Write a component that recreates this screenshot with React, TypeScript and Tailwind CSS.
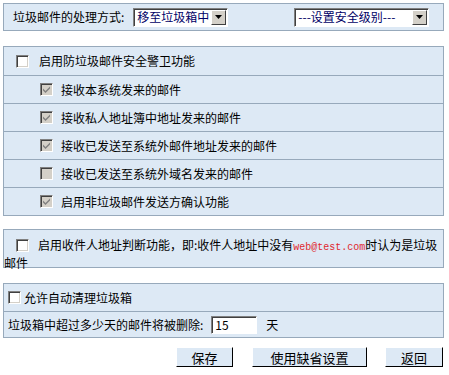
import React from 'react';

const font = "font-['SimSun','Noto_Sans_CJK_SC',sans-serif]";

function Box({ checked = false, disabled = false }: { checked?: boolean; disabled?: boolean }) {
  return (
    <span
      className={`inline-flex h-[13px] w-[13px] shrink-0 items-center justify-center border border-t-[#808080] border-l-[#808080] border-b-white border-r-white shadow-[inset_1px_1px_0_#404040,inset_-1px_-1px_0_#d4d0c8] ${
        disabled ? 'bg-[#d4d0c8]' : 'bg-white'
      }`}
    >
      {checked && (
        <svg width="7" height="7" viewBox="0 0 7 7">
          <path d="M0 2.5 L2.5 5 L7 0.5 L7 2.5 L2.5 7 L0 4.5 Z" fill="#808080" />
        </svg>
      )}
    </span>
  );
}

function Select({ label, width }: { label: string; width: string }) {
  return (
    <span
      className={`inline-flex h-[19px] ${width} items-center justify-between border border-t-[#808080] border-l-[#808080] border-b-white border-r-white bg-white shadow-[inset_1px_1px_0_#404040] pl-[3px] pr-[1px]`}
    >
      <span className="whitespace-nowrap text-[12px] leading-none text-[#000066]">{label}</span>
      <span className="flex h-[15px] w-[15px] shrink-0 items-center justify-center border border-t-white border-l-white border-b-[#404040] border-r-[#404040] bg-[#d4d0c8]">
        <svg width="7" height="4" viewBox="0 0 7 4">
          <path d="M0 0 H7 L3.5 4 Z" fill="#000" />
        </svg>
      </span>
    </span>
  );
}

const subRows = [
  { text: '接收本系统发来的邮件', checked: true },
  { text: '接收私人地址簿中地址发来的邮件', checked: true },
  { text: '接收已发送至系统外邮件地址发来的邮件', checked: true },
  { text: '接收已发送至系统外域名发来的邮件', checked: false },
  { text: '启用非垃圾邮件发送方确认功能', checked: true },
];

export default function App() {
  return (
    <div className={`min-h-[375px] w-[449px] bg-white px-[3px] pt-[3px] text-[12px] text-black ${font}`}>
      {/* Handling mode */}
      <div className="flex h-[28px] w-[441px] items-center border border-[#97a9bb] bg-[#dde9f5] pl-[9px]">
        <span>垃圾邮件的处理方式:</span>
        <span className="ml-[9px] flex">
          <Select label="移至垃圾箱中" width="w-[95px]" />
        </span>
        <span className="ml-[66px] flex">
          <Select label="---设置安全级别---" width="w-[135px]" />
        </span>
      </div>

      {/* Security guard */}
      <div className="mt-[15px] w-[441px] border border-[#97a9bb] bg-[#dde9f5]">
        <div className="flex h-[28px] items-center gap-[10px] pl-[12px]">
          <Box />
          <span>启用防垃圾邮件安全警卫功能</span>
        </div>
        {subRows.map((row) => (
          <div key={row.text} className="flex h-[28px] items-center gap-[8px] border-t border-[#97a9bb] pl-[36px]">
            <Box checked={row.checked} disabled />
            <span>{row.text}</span>
          </div>
        ))}
      </div>

      {/* Recipient check */}
      <div className="mt-[13px] h-[39px] w-[441px] border border-[#97a9bb] bg-[#dde9f5] pt-[7px] leading-[15px]">
        <span className="ml-[12px] mr-[9px] inline-block align-[-2px]">
          <Box />
        </span>
        启用收件人地址判断功能，即:收件人地址中没有
        <span className="font-['Liberation_Mono',monospace] text-[10px] text-[#e0282e]">web@test.com</span>
        时认为是垃圾
        <br />
        邮件
      </div>

      {/* Auto clean */}
      <div className="mt-[15px] w-[441px] border border-[#97a9bb] bg-[#dde9f5]">
        <div className="flex h-[27px] items-center gap-[3px] pl-[4px]">
          <Box />
          <span>允许自动清理垃圾箱</span>
        </div>
        <div className="flex h-[26px] items-center border-t border-[#97a9bb] pl-[4px]">
          <span>垃圾箱中超过多少天的邮件将被删除:</span>
          <span className="ml-[8px] flex h-[18px] w-[46px] items-center border border-t-[#808080] border-l-[#808080] border-b-white border-r-white bg-white pl-[3px] shadow-[inset_1px_1px_0_#404040]">
            15
          </span>
          <span className="ml-[9px]">天</span>
        </div>
      </div>

      {/* Buttons */}
      <div className="mt-[9px] flex text-[13px]">
        <button className="ml-[173px] h-[20px] w-[57px] border border-t-white border-l-white border-b-black border-r-black bg-[#dde9f5] leading-none">
          保存
        </button>
        <button className="ml-[19px] h-[20px] w-[115px] border border-t-white border-l-white border-b-black border-r-black bg-[#dde9f5] leading-none">
          使用缺省设置
        </button>
        <button className="ml-[18px] h-[20px] w-[58px] border border-t-white border-l-white border-b-black border-r-black bg-[#dde9f5] leading-none">
          返回
        </button>
      </div>
    </div>
  );
}
